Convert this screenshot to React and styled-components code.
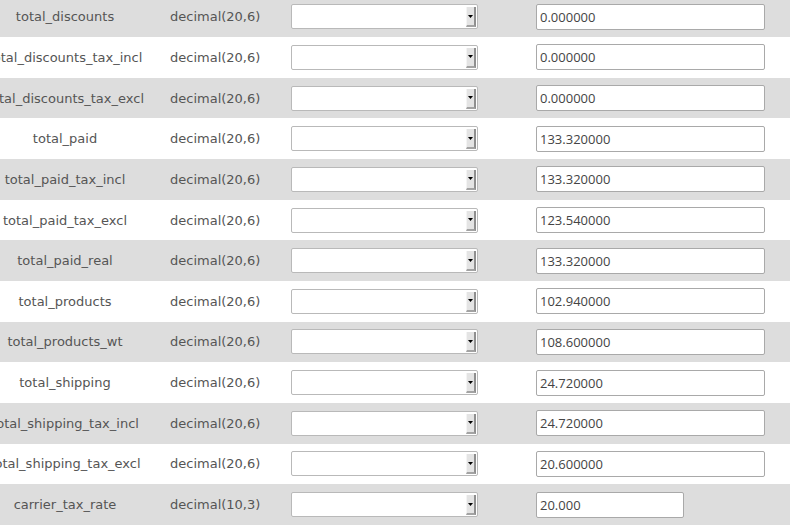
import React from "react";
import styled, { createGlobalStyle } from "styled-components";

const Global = createGlobalStyle`
  html, body { margin: 0; padding: 0; background: #fff; overflow: hidden; }
`;

const Table = styled.div`
  display: flex;
  flex-direction: column;
  margin: -3.6px 0 0 -40px;
`;

const Row = styled.div`
  display: grid;
  grid-template-columns: 210px 121px 245px 1fr;
  align-items: center;
  height: 40.67px;
  background: ${(p) => (p.$alt ? "#dddddd" : "#ffffff")};
`;

const Name = styled.div`
  text-align: center;
  white-space: nowrap;
  font-family: "DejaVu Sans", Verdana, sans-serif;
  font-size: 13px;
  color: #555;
`;

const Type = styled.div`
  white-space: nowrap;
  font-family: "DejaVu Sans", Verdana, sans-serif;
  font-size: 13px;
  color: #555;
`;

const SelectBox = styled.div`
  box-sizing: border-box;
  width: 187px;
  height: 25px;
  display: flex;
  justify-content: flex-end;
  align-items: stretch;
  background: #fff;
  border: 1px solid #b9b9b9;
  border-radius: 2px;
  padding: 2px 1px 1px 0;
`;

const ArrowButton = styled.div`
  box-sizing: border-box;
  width: 10px;
  display: flex;
  align-items: center;
  justify-content: center;
  background: #e4e4e4;
  border-left: 1px solid #f4f4f4;
  border-right: 2px solid #8f8f8f;
  border-bottom: 2px solid #a3a3a3;
`;

const Input = styled.input`
  box-sizing: border-box;
  width: ${(p) => (p.$narrow ? "148px" : "229px")};
  height: 26px;
  padding: 0 3px;
  border: 1px solid #a9a9a9;
  border-radius: 2px;
  background: #fff;
  font-family: "Open Sans", "Noto Sans", sans-serif;
  font-size: 13px;
  color: #444;
  outline: none;
`;

const rows = [
  ["total_discounts", "decimal(20,6)", "0.000000"],
  ["total_discounts_tax_incl", "decimal(20,6)", "0.000000"],
  ["total_discounts_tax_excl", "decimal(20,6)", "0.000000"],
  ["total_paid", "decimal(20,6)", "133.320000"],
  ["total_paid_tax_incl", "decimal(20,6)", "133.320000"],
  ["total_paid_tax_excl", "decimal(20,6)", "123.540000"],
  ["total_paid_real", "decimal(20,6)", "133.320000"],
  ["total_products", "decimal(20,6)", "102.940000"],
  ["total_products_wt", "decimal(20,6)", "108.600000"],
  ["total_shipping", "decimal(20,6)", "24.720000"],
  ["total_shipping_tax_incl", "decimal(20,6)", "24.720000"],
  ["total_shipping_tax_excl", "decimal(20,6)", "20.600000"],
  ["carrier_tax_rate", "decimal(10,3)", "20.000"],
];

export default function App() {
  return (
    <>
      <Global />
      <Table>
        {rows.map(([name, type, value], i) => (
          <Row key={name} $alt={i % 2 === 0}>
            <Name>{name}</Name>
            <Type>{type}</Type>
            <div>
              <SelectBox>
                <ArrowButton>
                  <svg width="5" height="3" viewBox="0 0 5 3">
                    <path d="M0 0h5L2.5 3z" fill="#000" />
                  </svg>
                </ArrowButton>
              </SelectBox>
            </div>
            <div>
              <Input
                readOnly
                defaultValue={value}
                $narrow={name === "carrier_tax_rate"}
              />
            </div>
          </Row>
        ))}
      </Table>
    </>
  );
}
